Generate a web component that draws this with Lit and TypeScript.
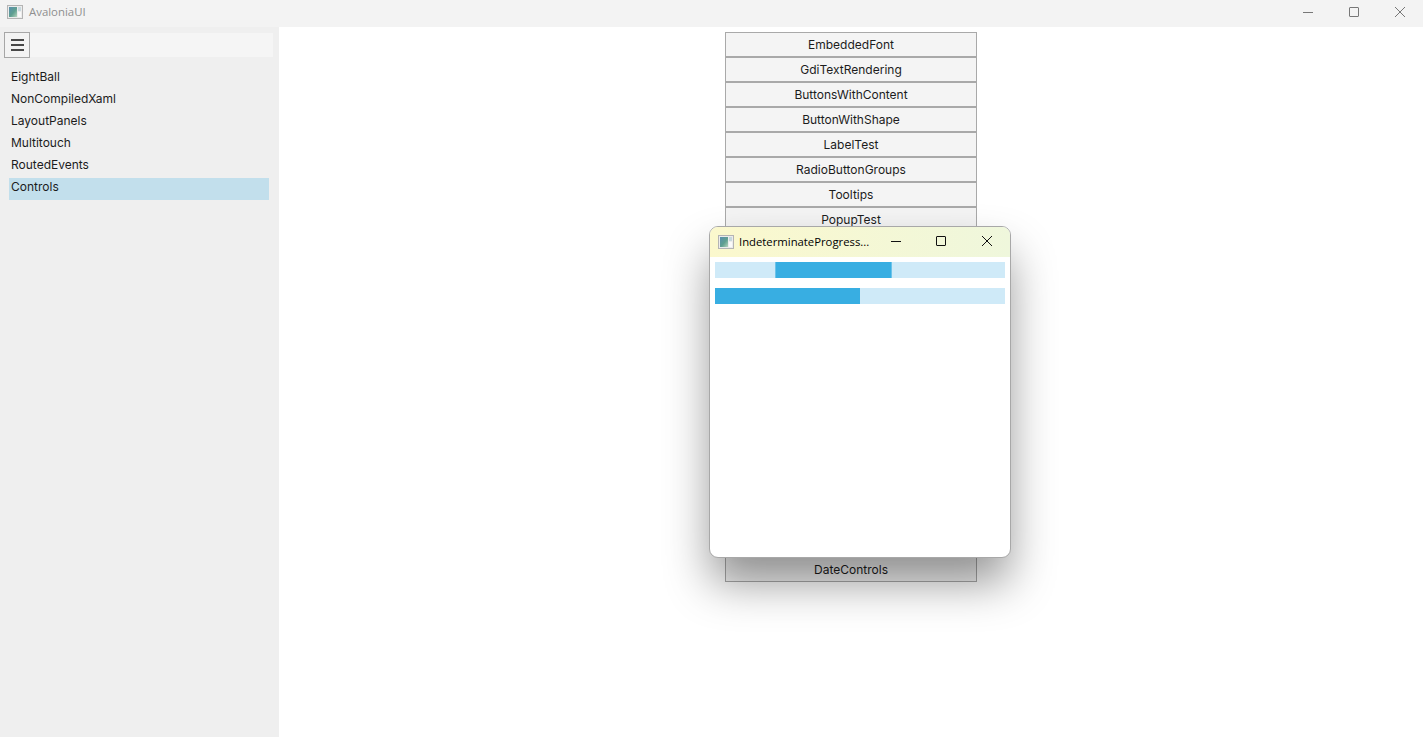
import { LitElement, html, css, svg } from "lit";
import { customElement } from "lit/decorators.js";

const appIcon = (id: string) => svg`<svg class="appicon" width="16" height="14" viewBox="0 0 16 14">
  <defs><linearGradient id=${id} x1="0" y1="0" x2="1" y2="1"><stop offset="0" stop-color="#5a8fae"/><stop offset="0.55" stop-color="#5f9f90"/><stop offset="1" stop-color="#b6d4bc"/></linearGradient></defs>
  <rect x="0.5" y="0.5" width="15" height="13" fill="#ececec" stroke="#b4b4b4"/>
  <rect x="2" y="2" width="8" height="10" fill="url(#${id})"/>
  <rect x="11" y="2" width="3" height="4" fill="#c6d8de"/>
  <rect x="11" y="7" width="3" height="5" fill="#fafafa"/>
</svg>`;

const minIcon = svg`<svg width="10" height="10" viewBox="0 0 10 10"><path d="M0 5.5H10" stroke="currentColor" fill="none"/></svg>`;
const maxIcon = svg`<svg width="10" height="10" viewBox="0 0 10 10"><rect x="0.5" y="0.5" width="9" height="9" rx="0.5" stroke="currentColor" fill="none"/></svg>`;
const closeIcon = svg`<svg width="10" height="10" viewBox="0 0 10 10"><path d="M0 0L10 10M10 0L0 10" stroke="currentColor" fill="none"/></svg>`;

@customElement("app-root")
export class AppRoot extends LitElement {
  static styles = css`
    :host { display: block; position: relative; width: 100vw; height: 100vh; overflow: hidden; background: #fff;
      font-family: Inter, "Liberation Sans", sans-serif; font-size: 12px; color: #1c1c1c; }
    .shell { display: flex; flex-direction: column; height: 100%; }
    .titlebar { flex: 0 0 27px; display: flex; align-items: center; background: #f3f3f3; padding-left: 7px; color: #8f8f8f;
      font-family: "Open Sans", "Liberation Sans", sans-serif; font-size: 11.4px; }
    .titlebar .label { margin-left: 6px; flex: 1; margin-top: -5px; }
    .appicon { flex: none; margin-top: -3px; }
    .controls { display: flex; color: #777; margin-top: -4px; }
    .controls span { width: 46px; display: flex; justify-content: center; align-items: center; }
    .titlebar .controls span:first-child { width: 44px; margin-right: 1px; }
    .body { flex: 1; display: flex; min-height: 0; }
    .side { flex: 0 0 279px; background: #efefef; box-sizing: border-box; padding: 5px 6px 0 4px; }
    .top { display: flex; }
    .burger { width: 26px; height: 26px; box-sizing: border-box; border: 1px solid #a6a6a6; background: #f3f3f3; display: flex; align-items: center; justify-content: center; }
    .search { flex: 1; height: 24px; margin-top: 1px; background: #f5f5f5; }
    .list { margin: 10px 4px 0 5px; }
    .item { height: 22px; line-height: 17px; padding-left: 2px; }
    .item.sel { background: #c2dfec; }
    .main { flex: 1; display: flex; flex-direction: column; align-items: center; padding-top: 5px; }
    .btn { width: 252px; height: 25px; box-sizing: border-box; flex: none; border: 1px solid #a9a9a9; background: #f4f4f4; display: flex; align-items: center; justify-content: center; }
    .hidden-slot { height: 325px; flex: none; }
    .popup { position: absolute; left: 709px; top: 226px; width: 302px; height: 332px; box-sizing: border-box; border: 1px solid #a8a8a8; border-radius: 9px; background: #fff;
      box-shadow: 0 26px 46px -2px rgba(0,0,0,.42); overflow: hidden; display: flex; flex-direction: column; }
    .ptitle { flex: 0 0 30px; display: flex; align-items: center; padding-left: 8px; color: #000; background: linear-gradient(90deg, #fbf8cd, #eff7dc);
      font-family: "Open Sans", "Liberation Sans", sans-serif; font-size: 11.3px; }
    .ptitle .label { margin-left: 5px; margin-top: -2px; flex: 1; min-width: 0; white-space: nowrap; }
    .ptitle .appicon { margin-top: -1px; }
    .ptitle .controls { color: #111; margin: -2px 0 0 0; }
    .ptitle .controls span:first-child { width: 44px; }
    .pbody { padding: 5px; display: flex; flex-direction: column; gap: 10px; }
    .track { height: 16px; background: #cfeaf8; position: relative; }
    .fill { height: 100%; background: #38aee2; box-sizing: border-box; }
    .fill.edge { border-left: 1px solid #6cc3ea; border-right: 1px solid #6cc3ea; }
  `;

  render() {
    const nav = ["EightBall", "NonCompiledXaml", "LayoutPanels", "Multitouch", "RoutedEvents", "Controls"];
    const top = ["EmbeddedFont", "GdiTextRendering", "ButtonsWithContent", "ButtonWithShape", "LabelTest", "RadioButtonGroups", "Tooltips", "PopupTest"];
    return html`
      <div class="shell">
        <div class="titlebar">
          ${appIcon("g1")}
          <span class="label">AvaloniaUI</span>
          <div class="controls"><span>${minIcon}</span><span>${maxIcon}</span><span>${closeIcon}</span></div>
        </div>
        <div class="body">
          <div class="side">
            <div class="top">
              <div class="burger">
                <svg width="13" height="12" viewBox="0 0 13 12"><path d="M0 1H13M0 6H13M0 11H13" stroke="#111" stroke-width="1.4" fill="none"/></svg>
              </div>
              <div class="search"></div>
            </div>
            <div class="list">
              ${nav.map((n) => html`<div class="item ${n === "Controls" ? "sel" : ""}">${n}</div>`)}
            </div>
          </div>
          <div class="main">
            ${top.map((t) => html`<div class="btn">${t}</div>`)}
            <div class="hidden-slot"></div>
            <div class="btn">DateControls</div>
          </div>
        </div>
      </div>
      <div class="popup">
        <div class="ptitle">
          ${appIcon("g2")}
          <span class="label">IndeterminateProgress...</span>
          <div class="controls"><span>${minIcon}</span><span>${maxIcon}</span><span>${closeIcon}</span></div>
        </div>
        <div class="pbody">
          <div class="track"><div class="fill edge" style="width:117px;margin-left:60px"></div></div>
          <div class="track"><div class="fill" style="width:145px"></div></div>
        </div>
      </div>
    `;
  }
}
